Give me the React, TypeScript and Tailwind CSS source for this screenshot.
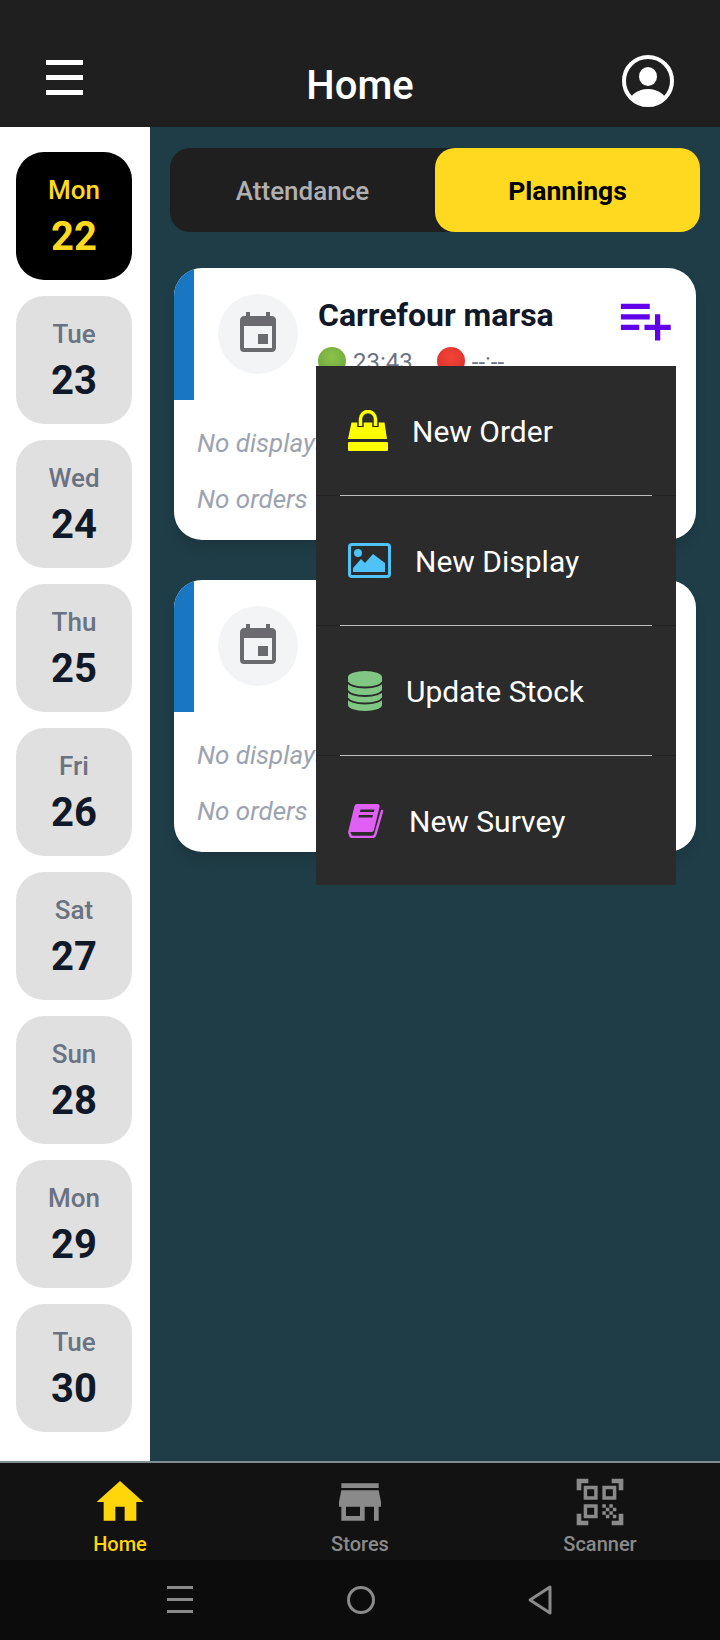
import { MdEvent, MdHome, MdPlaylistAdd, MdQrCodeScanner, MdStore } from 'react-icons/md';

const days = [
  { name: 'Mon', num: 22, active: true },
  { name: 'Tue', num: 23 },
  { name: 'Wed', num: 24 },
  { name: 'Thu', num: 25 },
  { name: 'Fri', num: 26 },
  { name: 'Sat', num: 27 },
  { name: 'Sun', num: 28 },
  { name: 'Mon', num: 29 },
  { name: 'Tue', num: 30 },
];

function BagIcon() {
  return (
    <svg viewBox="0 0 40 41" className="w-10 h-[41px]">
      <path d="M3.5 12.5h33L39 29H0z" fill="#ffff00" />
      <rect x="0" y="32" width="40" height="9" rx="1" fill="#ffff00" />
      <path d="M12.5 17V9a7.5 7.5 0 0 1 15 0v8" fill="none" stroke="#2b2b2b" strokeWidth="6.5" />
      <path d="M12.5 16V9a7.5 7.5 0 0 1 15 0v7" fill="none" stroke="#ffff00" strokeWidth="3.5" />
    </svg>
  );
}

function ImageIcon() {
  return (
    <svg viewBox="0 0 43 35" className="w-[43px] h-[35px]">
      <rect x="1.5" y="1.5" width="40" height="32" rx="2.5" fill="none" stroke="#4fc3f7" strokeWidth="3" />
      <circle cx="10" cy="10" r="4" fill="#4fc3f7" />
      <path d="M5 29v-4l8-9 4 4 8-9 12 9v9z" fill="#4fc3f7" />
    </svg>
  );
}

function StockIcon() {
  return (
    <svg viewBox="0 0 34 40" className="w-[34px] h-10">
      <path d="M0 6a17 6 0 0 1 34 0v28a17 6 0 0 1-34 0z" fill="#81c784" />
      <path d="M0 11a17 5.500 0 0 0 34 0M0 19.500a17 5.500 0 0 0 34 0M0 27a17 5.500 0 0 0 34 0" fill="none" stroke="#2b2b2b" strokeWidth="2" />
    </svg>
  );
}

function BookIcon() {
  return (
    <svg viewBox="0 0 37 35" className="w-[37px] h-[35px]">
      <path d="M9 1h20c2 0 3 1 2.500 3L26 27c-.4 1.400-1.500 2-3 2H5c-2 0-3.500.6-4.500 2C0 31 0 29 .6 27L6.500 3C7 1.700 7.700 1 9 1z" fill="#e060f5" />
      <path d="M2 31c0 2 1 3 3 3h19c2 0 3-1 3.500-3L34 8" fill="none" stroke="#e060f5" strokeWidth="2.500" strokeLinecap="round" />
      <path d="M12.500 6.500h14l-.6 2.500h-14zM11 12h14l-.6 2.500h-14z" fill="#2b2b2b" />
    </svg>
  );
}

function ProfileIcon() {
  return (
    <svg viewBox="0 0 52 52" className="w-[52px] h-[52px]">
      <defs>
        <clipPath id="profile-clip">
          <circle cx="26" cy="26" r="23" />
        </clipPath>
      </defs>
      <circle cx="26" cy="26" r="24" fill="none" stroke="#fff" strokeWidth="4" />
      <ellipse cx="26" cy="21.500" rx="9" ry="9.500" fill="#fff" />
      <ellipse cx="26" cy="50" rx="20" ry="16" fill="#fff" clipPath="url(#profile-clip)" />
    </svg>
  );
}

function StoreCard({ title }: { title?: string }) {
  return (
    <div className="bg-white rounded-[28px] overflow-hidden h-[272px] mx-1 shadow-lg shrink-0">
      <div className="flex h-[132px]">
        <div className="w-5 bg-[#1976c2]" />
        <div className="ml-6 mt-[26px] w-20 h-20 rounded-full bg-[#f3f4f6] flex items-center justify-center">
          <MdEvent size={48} className="text-[#6b6b6f]" />
        </div>
        {title && (
          <div className="ml-[20px] flex-1 relative">
            <p className="text-[32px] leading-[40px] font-bold text-[#111827] mt-[27px]">{title}</p>
            <div className="flex items-start mt-[12px] text-[#6b7280] text-[24px] leading-[30px]">
              <span className="w-7 h-7 rounded-full bg-[radial-gradient(circle_at_50%_35%,#8bc34a,#689f38)]" />
              <span className="ml-[7px]">23:43</span>
              <span className="w-7 h-7 rounded-full bg-[radial-gradient(circle_at_50%_35%,#f44336,#d32f2f)] ml-[24px]" />
              <span className="ml-[7px]">--:--</span>
            </div>
            <MdPlaylistAdd size={63} className="text-[#6200ea] absolute right-[20px] top-[20px]" />
          </div>
        )}
      </div>
      <div className="pl-[23px] pt-[28px] text-[26px] leading-[30px] italic text-[#9ca3af]">
        <p>No displays</p>
        <p className="mt-[26px]">No orders</p>
      </div>
    </div>
  );
}

function MenuDivider() {
  return (
    <div className="h-px bg-[#222222]">
      <div className="h-px mx-6 bg-[#bdbdbd]" />
    </div>
  );
}

export default function App() {
  return (
    <div className="relative w-[720px] h-[1640px] flex flex-col overflow-hidden font-['Roboto',sans-serif]">
      <header className="h-[127px] shrink-0 bg-[#1f1f1f] grid grid-cols-3 px-[46px]">
        <div className="mt-[60px] w-[37px] h-[35px] flex flex-col justify-between">
          <span className="h-[5px] bg-white" />
          <span className="h-[5px] bg-white" />
          <span className="h-[5px] bg-white" />
        </div>
        <h1 className="mt-[62px] text-center text-white text-[40px] leading-[48px] font-medium">Home</h1>
        <div className="mt-[55px] flex justify-end">
          <ProfileIcon />
        </div>
      </header>

      <div className="flex-1 flex min-h-0">
        <aside className="w-[150px] bg-white shrink-0 pt-[25px] pl-4 pr-[18px] flex flex-col gap-4">
          {days.map((d) => (
            <div
              key={d.num}
              className={`h-[128px] rounded-[28px] flex flex-col items-center justify-center pt-[4px] ${
                d.active ? 'bg-black text-[#ffd820]' : 'bg-[#e0e0e0] text-[#111827]'
              }`}
            >
              <span className={`text-[26px] leading-[32px] font-medium -mt-[1px] ${d.active ? '' : 'text-[#6b7280]'}`}>{d.name}</span>
              <span className="text-[40px] leading-[48px] font-bold mt-[7px]">{d.num}</span>
            </div>
          ))}
        </aside>

        <main className="flex-1 bg-[#1f3d47] px-5 pt-[21px] flex flex-col">
          <div className="flex h-[84px] rounded-[20px] bg-[#1f1f1f] shrink-0">
            <div className="w-[265px] flex items-center justify-center pt-[2px] text-[26px] font-medium text-[#b0b0b0]">Attendance</div>
            <div className="flex-1 rounded-[20px] bg-[#ffd820] flex items-center justify-center pt-[2px] text-[26.5px] font-bold text-black">Plannings</div>
          </div>
          <div className="mt-9 flex flex-col gap-10">
            <StoreCard title="Carrefour marsa" />
            <StoreCard />
          </div>
        </main>
      </div>

      <nav className="h-[99px] shrink-0 bg-[#121212] border-t-2 border-[#7f8c92] grid grid-cols-3">
        <div className="flex flex-col items-center text-[#ffd60a]">
          <MdHome size={56} className="mt-[11px] -mb-[2px]" />
          <span className="text-[20px] leading-[24px] font-medium mt-[4px]">Home</span>
        </div>
        <div className="flex flex-col items-center text-[#8a8a8a]">
          <MdStore size={56} className="mt-[11px] -mb-[2px]" />
          <span className="text-[20px] leading-[24px] font-medium mt-[4px]">Stores</span>
        </div>
        <div className="flex flex-col items-center text-[#8a8a8a]">
          <MdQrCodeScanner size={56} className="mt-[11px] -mb-[2px]" />
          <span className="text-[20px] leading-[24px] font-medium mt-[4px]">Scanner</span>
        </div>
      </nav>

      <div className="h-20 shrink-0 bg-[#0c0c0c] flex items-center justify-center">
        <div className="w-[385px] flex items-center justify-between -ml-[1px] -mt-[1px]">
          <div className="w-[26px] h-[27px] flex flex-col justify-between">
            <span className="h-[3px] bg-[#8a8a8a]" />
            <span className="h-[3px] bg-[#8a8a8a]" />
            <span className="h-[3px] bg-[#8a8a8a]" />
          </div>
          <span className="w-7 h-7 rounded-full border-[3px] border-[#8a8a8a]" />
          <svg viewBox="0 0 24 30" className="w-6 h-[30px]">
            <path d="M22 2v26L2 15z" fill="none" stroke="#8a8a8a" strokeWidth="3" strokeLinejoin="round" />
          </svg>
        </div>
      </div>

      {/* popup menu over the cards */}
      <div className="absolute left-[316px] top-[366px] w-[360px] h-[519px] bg-[#2b2b2b] flex flex-col text-white text-[30px] leading-[36px]">
        <div className="h-[129px] flex items-center gap-6 pl-8">
          <BagIcon />
          <span className="mt-[2px]">New Order</span>
        </div>
        <MenuDivider />
        <div className="h-[129px] flex items-center gap-6 pl-8">
          <ImageIcon />
          <span className="mt-[2px]">New Display</span>
        </div>
        <MenuDivider />
        <div className="h-[129px] flex items-center gap-6 pl-8">
          <StockIcon />
          <span className="mt-[2px]">Update Stock</span>
        </div>
        <MenuDivider />
        <div className="h-[129px] flex items-center gap-6 pl-8">
          <BookIcon />
          <span className="mt-[2px]">New Survey</span>
        </div>
      </div>
    </div>
  );
}
